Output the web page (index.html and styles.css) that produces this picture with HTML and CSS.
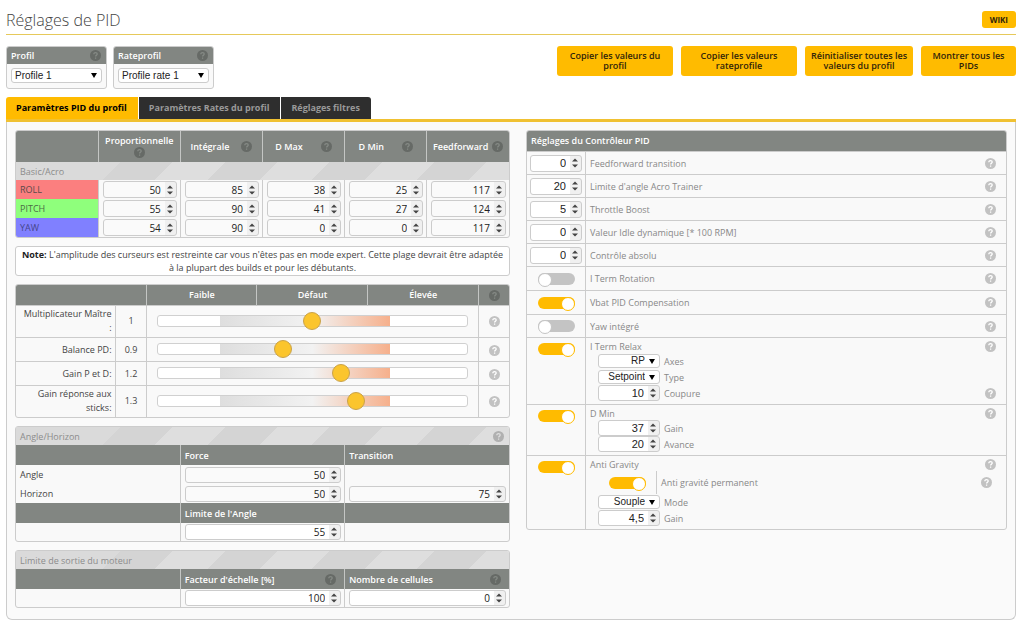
FILE: index.html
```html
<!DOCTYPE html>
<html lang="fr">
<head>
<meta charset="utf-8">
<title>Réglages de PID</title>
<link rel="stylesheet" href="styles.css">
</head>
<body>
<svg class="sprite" aria-hidden="true">
  <symbol id="help" viewBox="0 0 12 12">
    <circle cx="6" cy="6" r="6" fill="currentColor" stroke="none"/>
    <path d="M4.2 4.7C4.2 3.4 5 2.8 6 2.8s1.9.6 1.9 1.6C7.900 5.600 6.100 5.600 6.100 7.100M6.100 8.200V9.500" fill="none" stroke-width="1.400"/>
  </symbol>
</svg>

<header class="page-head">
  <h1>Réglages de PID</h1>
  <button class="btn wiki">WIKI</button>
</header>

<section class="toolbar">
  <div class="picker">
    <label for="profile">Profil <svg class="help dark"><use href="#help"/></svg></label>
    <div class="picker-body"><select id="profile"><option>Profile 1</option></select></div>
  </div>
  <div class="picker">
    <label for="rate">Rateprofil <svg class="help dark"><use href="#help"/></svg></label>
    <div class="picker-body"><select id="rate"><option>Profile rate 1</option></select></div>
  </div>
  <div class="actions">
    <button class="btn wide">Copier les valeurs du profil</button>
    <button class="btn wide">Copier les valeurs rateprofile</button>
    <button class="btn medium">Réinitialiser toutes les valeurs du profil</button>
    <button class="btn small">Montrer tous les PIDs</button>
  </div>
</section>

<nav class="tabs">
  <a href="#pid" class="active">Paramètres PID du profil</a>
  <a href="#rates">Paramètres Rates du profil</a>
  <a href="#filters">Réglages filtres</a>
</nav>

<main class="panel" id="pid">
  <div class="column">
    <div class="box">
      <table class="pid">
        <thead>
          <tr>
            <th></th>
            <th>Proportionnelle<svg class="help dark under"><use href="#help"/></svg></th>
            <th><span class="head">Intégrale <svg class="help dark"><use href="#help"/></svg></span></th>
            <th><span class="head wider">D Max <svg class="help dark"><use href="#help"/></svg></span></th>
            <th><span class="head wider">D Min <svg class="help dark"><use href="#help"/></svg></span></th>
            <th><span class="head tight">Feedforward <svg class="help dark"><use href="#help"/></svg></span></th>
          </tr>
        </thead>
        <tbody>
          <tr><th colspan="6" class="stripe">Basic/Acro</th></tr>
          <tr>
            <th class="axis roll">ROLL</th>
            <td><input type="number" aria-label="Roll P" value="50"></td>
            <td><input type="number" aria-label="Roll I" value="85"></td>
            <td><input type="number" aria-label="Roll D Max" value="38"></td>
            <td><input type="number" aria-label="Roll D Min" value="25"></td>
            <td><input type="number" aria-label="Roll Feedforward" value="117"></td>
          </tr>
          <tr>
            <th class="axis pitch">PITCH</th>
            <td><input type="number" aria-label="Pitch P" value="55"></td>
            <td><input type="number" aria-label="Pitch I" value="90"></td>
            <td><input type="number" aria-label="Pitch D Max" value="41"></td>
            <td><input type="number" aria-label="Pitch D Min" value="27"></td>
            <td><input type="number" aria-label="Pitch Feedforward" value="124"></td>
          </tr>
          <tr>
            <th class="axis yaw">YAW</th>
            <td><input type="number" aria-label="Yaw P" value="54"></td>
            <td><input type="number" aria-label="Yaw I" value="90"></td>
            <td><input type="number" aria-label="Yaw D Max" value="0"></td>
            <td><input type="number" aria-label="Yaw D Min" value="0"></td>
            <td><input type="number" aria-label="Yaw Feedforward" value="117"></td>
          </tr>
        </tbody>
      </table>
    </div>

    <p class="note"><strong>Note:</strong> L'amplitude des curseurs est restreinte car vous n'êtes pas en mode expert. Cette plage devrait être adaptée à la plupart des builds et pour les débutants.</p>

    <div class="box">
      <table class="sliders">
        <colgroup><col class="c-name"><col class="c-value"><col><col><col><col class="c-help"></colgroup>
        <thead>
          <tr>
            <th colspan="2"></th><th>Faible</th><th>Défaut</th><th>Élevée</th>
            <th><svg class="help dark"><use href="#help"/></svg></th>
          </tr>
        </thead>
        <tbody>
          <tr class="tall">
            <th><label for="s1">Multiplicateur Maître :</label></th><td>1</td>
            <td colspan="3"><input id="s1" type="range" value="50"></td>
            <td><svg class="help"><use href="#help"/></svg></td>
          </tr>
          <tr>
            <th><label for="s2">Balance PD:</label></th><td>0.9</td>
            <td colspan="3"><input id="s2" type="range" value="40"></td>
            <td><svg class="help"><use href="#help"/></svg></td>
          </tr>
          <tr>
            <th><label for="s3">Gain P et D:</label></th><td>1.2</td>
            <td colspan="3"><input id="s3" type="range" value="60"></td>
            <td><svg class="help"><use href="#help"/></svg></td>
          </tr>
          <tr class="tall">
            <th><label for="s4">Gain réponse aux sticks:</label></th><td>1.3</td>
            <td colspan="3"><input id="s4" type="range" value="65"></td>
            <td><svg class="help"><use href="#help"/></svg></td>
          </tr>
        </tbody>
      </table>
    </div>

    <div class="box">
      <h2 class="stripe">Angle/Horizon <svg class="help muted"><use href="#help"/></svg></h2>
      <table class="thirds">
        <tbody>
          <tr class="sub"><th></th><th>Force</th><th>Transition</th></tr>
          <tr><td>Angle</td><td><input type="number" aria-label="Angle force" value="50"></td><td></td></tr>
          <tr><td>Horizon</td><td><input type="number" aria-label="Horizon force" value="50"></td><td><input type="number" aria-label="Horizon transition" value="75"></td></tr>
          <tr class="sub"><th></th><th>Limite de l'Angle</th><th></th></tr>
          <tr><td></td><td><input class="white" type="number" aria-label="Limite de l'Angle" value="55"></td><td></td></tr>
        </tbody>
      </table>
    </div>

    <div class="box">
      <h2 class="stripe">Limite de sortie du moteur</h2>
      <table class="thirds">
        <tbody>
          <tr class="sub">
            <th></th>
            <th><span class="spread">Facteur d'échelle [%] <svg class="help dark"><use href="#help"/></svg></span></th>
            <th><span class="spread">Nombre de cellules <svg class="help dark"><use href="#help"/></svg></span></th>
          </tr>
          <tr><td></td><td><input class="white" type="number" aria-label="Facteur d'échelle" value="100"></td><td><input class="white" type="number" aria-label="Nombre de cellules" value="0"></td></tr>
        </tbody>
      </table>
    </div>
  </div>

  <div class="box controller">
    <h2 class="title">Réglages du Contrôleur PID</h2>

    <div class="row"><div class="ctl"><input class="white" id="ff" type="number" value="0"></div><div class="desc"><label for="ff">Feedforward transition</label><svg class="help"><use href="#help"/></svg></div></div>
    <div class="row"><div class="ctl"><input class="white" id="acro" type="number" value="20"></div><div class="desc"><label for="acro">Limite d'angle Acro Trainer</label><svg class="help"><use href="#help"/></svg></div></div>
    <div class="row"><div class="ctl"><input class="white" id="boost" type="number" value="5"></div><div class="desc"><label for="boost">Throttle Boost</label><svg class="help"><use href="#help"/></svg></div></div>
    <div class="row"><div class="ctl"><input class="white" id="idle" type="number" value="0"></div><div class="desc"><label for="idle">Valeur Idle dynamique [* 100 RPM]</label><svg class="help"><use href="#help"/></svg></div></div>
    <div class="row"><div class="ctl"><input class="white" id="abs" type="number" value="0"></div><div class="desc"><label for="abs">Contrôle absolu</label><svg class="help"><use href="#help"/></svg></div></div>
    <div class="row toggle"><div class="ctl"><input id="rot" type="checkbox"></div><div class="desc"><label for="rot">I Term Rotation</label><svg class="help"><use href="#help"/></svg></div></div>
    <div class="row toggle"><div class="ctl"><input id="vbat" type="checkbox" checked></div><div class="desc"><label for="vbat">Vbat PID Compensation</label><svg class="help"><use href="#help"/></svg></div></div>
    <div class="row"><div class="ctl"><input id="yawint" type="checkbox"></div><div class="desc"><label for="yawint">Yaw intégré</label><svg class="help"><use href="#help"/></svg></div></div>

    <div class="row group">
      <div class="ctl"><input id="relax" type="checkbox" checked></div>
      <div class="options">
        <div class="line"><label for="relax">I Term Relax</label><svg class="help"><use href="#help"/></svg></div>
        <div class="opt"><select id="axes"><option>RP</option></select><label for="axes">Axes</label></div>
        <div class="opt"><select id="type"><option>Setpoint</option></select><label for="type">Type</label></div>
        <div class="opt"><input class="white" id="cut" type="number" value="10"><label for="cut">Coupure</label><svg class="help"><use href="#help"/></svg></div>
      </div>
    </div>

    <div class="row group">
      <div class="ctl"><input id="dmin" type="checkbox" checked></div>
      <div class="options">
        <div class="line"><label for="dmin">D Min</label><svg class="help"><use href="#help"/></svg></div>
        <div class="opt"><input class="white" id="dgain" type="number" value="37"><label for="dgain">Gain</label></div>
        <div class="opt"><input class="white" id="adv" type="number" value="20"><label for="adv">Avance</label></div>
      </div>
    </div>

    <div class="row group">
      <div class="ctl"><input id="grav" type="checkbox" checked></div>
      <div class="options">
        <div class="line"><label for="grav">Anti Gravity</label><svg class="help"><use href="#help"/></svg></div>
        <div class="opt permanent"><span class="cell"><input id="perm" type="checkbox" checked></span><label for="perm">Anti gravité permanent</label><svg class="help"><use href="#help"/></svg></div>
        <div class="opt"><select id="mode"><option>Souple</option></select><label for="mode">Mode</label></div>
        <div class="opt"><input class="white spin" id="ggain" type="text" inputmode="decimal" value="4,5"><label for="ggain">Gain</label></div>
      </div>
    </div>
  </div>
</main>
</body>
</html>
```

FILE: styles.css
```css
* { box-sizing: border-box; }

body {
  margin: 0;
  padding: 0 8px 4px 6px;
  background: #fff;
  color: #444;
  font: 9px/13px "Open Sans", "Noto Sans", sans-serif;
}

.sprite { display: none; }

h1, h2, p { margin: 0; font-weight: normal; }

/* help marks */
.help {
  flex: none;
  display: inline-block;
  width: 11px;
  height: 11px;
  vertical-align: middle;
  color: #c2c2c2;
  stroke: #fff;
}
.help.dark { color: #666a66; stroke: #858a85; }
.help.muted { color: #b0b0b0; stroke: #ddd; }

/* page header */
.page-head {
  display: flex;
  align-items: center;
  justify-content: space-between;
  height: 35px;
  padding-top: 5px;
  border-bottom: 1px solid #e6c95a;
}
h1 { font-size: 16px; line-height: 22px; font-weight: 300; }

.btn {
  border: 0;
  border-radius: 3px;
  background: #fb0;
  color: #30240a;
  font: 600 9px/10px "Open Sans", "Noto Sans", sans-serif;
  padding: 0 8px;
}
.wiki { height: 17px; font-size: 8px; font-weight: 700; }

/* profile pickers and actions */
.toolbar { display: flex; gap: 6px; padding: 11px 0 8px; align-items: flex-start; }
.picker { width: 101px; border: 1px solid #ccc; border-radius: 3px; overflow: hidden; background: #f9f9f9; }
.picker label {
  display: flex;
  align-items: center;
  justify-content: space-between;
  height: 17px;
  padding: 0 5px 0 4px;
  background: #828682;
  color: #fff;
  font-weight: 600;
}
.picker-body { padding: 4px 4px 5px; display: flex; }
.actions { display: flex; gap: 8px; margin-left: auto; }
.actions .btn { height: 30px; }
.wide { width: 116px; }
.actions .medium { width: 108px; padding: 0 2px; }
.small { width: 95px; }

/* form controls */
input, select {
  margin: 0;
  border: 1px solid #ccc;
  border-radius: 3px;
  background-color: #fafafa;
  color: #222;
  font: 10px/12px "Liberation Sans", Arial, sans-serif;
  outline: 0;
}
select {
  appearance: none;
  width: 100%;
  height: 15px;
  padding: 0 14px 0 3px;
  background: #fff url("data:image/svg+xml,%3Csvg xmlns='http://www.w3.org/2000/svg' width='6' height='5'%3E%3Cpath d='M0 0h6L3 5z' fill='%23000'/%3E%3C/svg%3E") no-repeat right 4px center;
}
input[type="number"], .spin {
  appearance: textfield;
  display: block;
  width: 100%;
  height: 17px;
  padding: 0 15px 0 2px;
  text-align: right;
  font-size: 11px;
  background-image:
    url("data:image/svg+xml,%3Csvg xmlns='http://www.w3.org/2000/svg' width='6' height='10'%3E%3Cpath d='M0 3.500L3 .500l3 3zM0 6.500l3 3 3-3z' fill='%23444'/%3E%3C/svg%3E"),
    linear-gradient(#f0f0f0, #f0f0f0);
  background-repeat: no-repeat;
  background-position: right 3px center, right center;
  background-size: 6px 10px, 11px 100%;
}
input::-webkit-inner-spin-button { appearance: none; margin: 0; }
td input[type="number"] { font-family: "Open Sans", "Noto Sans", sans-serif; font-size: 10px; }
input.white { background-color: #fff; }

input[type="checkbox"] {
  appearance: none;
  flex: none;
  display: flex;
  width: 37px;
  height: 12px;
  border: 0;
  border-radius: 6px;
  background: #c4c4c4;
}
input[type="checkbox"]::before {
  content: "";
  width: 12px;
  height: 12px;
  border: 1px solid #c4c4c4;
  border-radius: 50%;
  background: #fff;
}
input[type="checkbox"]:checked { background: #fb0; justify-content: flex-end; }
input[type="checkbox"]:checked::before { border-color: #fb0; }

input[type="range"] {
  appearance: none;
  display: block;
  width: 100%;
  height: 18px;
  border: 0;
  background: none;
}
input[type="range"]::-webkit-slider-runnable-track {
  height: 12px;
  border: 1px solid #d0d0d0;
  border-radius: 3px;
  background: linear-gradient(90deg, #fff 20%, #dedede 20%, #f2f2f2 50%, #f6b08c 75%, #fff 75%);
}
input[type="range"]::-webkit-slider-thumb {
  appearance: none;
  width: 18px;
  height: 18px;
  margin-top: -4px;
  border: 1px solid #c9a24a;
  border-radius: 50%;
  background: #fbc52d;
}

/* tabs */
.tabs { display: flex; gap: 1px; border-bottom: 3px solid #f0c132; }
.tabs a {
  height: 22px;
  padding: 0 11px 0 10px;
  background: #2e2e2e;
  color: #999;
  line-height: 22px;
  font-weight: 700;
  text-decoration: none;
}
.tabs a.active { background: #fb0; color: #000; border-top-left-radius: 3px; }
.tabs a:last-child { border-top-right-radius: 3px; }

/* panel */
.panel {
  display: grid;
  grid-template-columns: 495fr 481fr;
  gap: 16px;
  align-items: start;
  padding: 8px 8px 11px;
  border: 1px solid #ccc;
  border-top: 0;
  border-radius: 0 0 6px 6px;
  background: #fafafa;
}
.column { display: flex; flex-direction: column; gap: 8px; min-width: 0; }
.box { border: 1px solid #ccc; border-radius: 3px; overflow: hidden; background: #f9f9f9; }

table { width: 100%; border-collapse: collapse; table-layout: fixed; }
th, td { padding: 0 3px 0 4px; text-align: left; font-weight: normal; }
td + td, th + td { border-left: 1px solid #ccc; }
thead th, .sub th { background: #828682; color: #fff; font-weight: 600; }
thead th { text-align: center; }
thead th + th, .sub th + th { border-left: 1px solid #c4c6c4; }

.stripe {
  background:
    linear-gradient(135deg, #dadada 0 74px, transparent 74px),
    repeating-linear-gradient(135deg, #d4d4d4 0 37px, #dedede 37px 74px);
  color: #8c8c8c;
}
h2.stripe { display: flex; align-items: center; justify-content: space-between; height: 18px; padding: 0 5px 0 4px; font-size: 9px; }

.pid thead tr { height: 31px; }
.pid thead th { padding: 0 3px; line-height: 11px; }
.pid tbody tr { height: 19px; }
.pid tbody tr:first-child { height: 18px; }
.under { display: block; margin: 1px auto 0; }
.head { display: flex; align-items: center; justify-content: center; gap: 12px; }
.head.wider { gap: 18px; }
.head.tight { gap: 4px; }
.axis { color: #5a4a4a; }
.roll { background: #fb7f7f; }
.pitch { background: #8fff7c; color: #4b6a45; }
.yaw { background: #8080ff; color: #46468a; }

.note { padding: 1px 4px; border: 1px solid #ccc; border-radius: 3px; background: #fff; text-align: center; }
.note strong { color: #222; }

.c-name { width: 99px; }
.c-value { width: 31px; }
.c-help { width: 31px; }
.sliders thead tr { height: 20px; }
.sliders tbody tr { height: 24px; border-top: 1px solid #ccc; }
.sliders tbody .tall { height: 32px; line-height: 14px; }
.sliders tbody th { text-align: right; }
.sliders td { text-align: center; }
.sliders td[colspan] { padding: 0 10px; }

.thirds tr { height: 19px; }
.thirds tr.sub { height: 20px; }
.thirds tr:last-child { height: 18px; }
.thirds input[type="number"] { height: 16px; }
.spread { display: flex; align-items: center; justify-content: space-between; padding-right: 5px; }

/* controller settings */
.title { height: 20px; padding: 0 4px; background: #828682; color: #fff; font-size: 9px; line-height: 20px; font-weight: 600; }
.row { display: flex; min-height: 23px; border-top: 1px solid #ccc; color: #888; }
.row.toggle { min-height: 24px; }
.ctl { width: 58px; flex: none; padding: 0 3px; display: flex; align-items: center; justify-content: center; }
.desc { flex: 1; display: flex; align-items: center; justify-content: space-between; padding: 0 10px 0 4px; border-left: 1px solid #ccc; }
.group .ctl { align-items: flex-start; padding-top: 5px; }
.options { flex: 1; padding: 2px 10px 3px 4px; border-left: 1px solid #ccc; }
.line { display: flex; align-items: center; justify-content: space-between; height: 13px; }
.opt { display: flex; align-items: center; gap: 4px; height: 16px; padding-left: 8px; }
.opt select, .opt input.white { width: 62px; flex: none; height: 16px; }
.opt select { height: 14px; text-align-last: right; }
.opt .help { margin-left: auto; }
.permanent { height: 23px; padding-right: 4px; }
.permanent .cell { display: flex; align-items: center; justify-content: center; width: 59px; height: 23px; border-right: 1px solid #ccc; }
```
